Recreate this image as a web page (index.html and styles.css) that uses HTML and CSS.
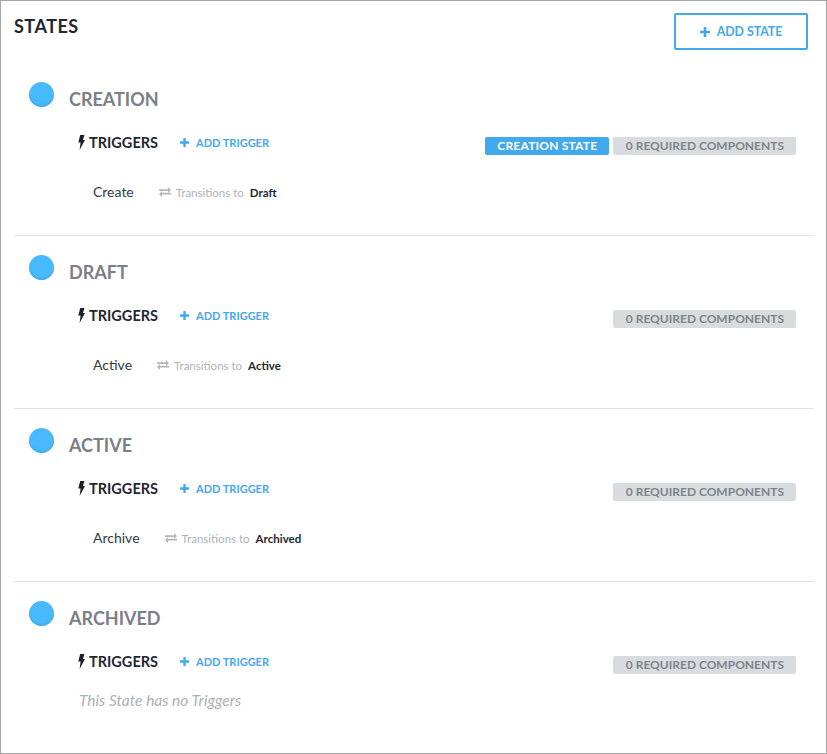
FILE: index.html
```html
<!DOCTYPE html>
<html lang="en">
<head>
    <meta charset="UTF-8">
    <title>States</title>
    <link rel="stylesheet" href="styles.css">
</head>
<body>
    <div class="panel">
        <div class="panel-head">
            <h2>STATES</h2>
            <a class="add-state" href="#">
                <svg class="plus" viewBox="0 0 10 10"><path d="M3.7 0h2.6v3.7H10v2.6H6.3V10H3.7V6.3H0V3.7h3.7z"/></svg>
                ADD STATE
            </a>
        </div>

        <div class="state">
            <span class="dot"></span>
            <div class="state-body">
                <h3>CREATION</h3>
                <div class="trigger-bar">
                    <svg class="bolt" viewBox="0 0 7 15"><path d="M2.2 0h4.3L4.9 5H7L1.6 15l1-7.4H.3z"/></svg>
                    <span class="trigger-title">TRIGGERS</span>
                    <a class="add-trigger" href="#">
                        <svg class="plus" viewBox="0 0 10 10"><path d="M3.7 0h2.6v3.7H10v2.6H6.3V10H3.7V6.3H0V3.7h3.7z"/></svg>
                        ADD TRIGGER
                    </a>
                    <div class="badges">
                        <span class="badge badge-blue">CREATION STATE</span>
                        <span class="badge">0 REQUIRED COMPONENTS</span>
                    </div>
                </div>
                <div class="trigger-row">
                    <span class="trigger-name">Create</span>
                    <svg class="swap" viewBox="0 0 12 10"><path d="M0 2.2h9V0l3 3-3 3V3.9H0zM12 5.8H3V4L0 7l3 3V7.6h9z"/></svg>
                    <span class="to-label">Transitions to</span>
                    <b class="to-state">Draft</b>
                </div>
            </div>
        </div>

        <div class="state">
            <span class="dot"></span>
            <div class="state-body">
                <h3>DRAFT</h3>
                <div class="trigger-bar">
                    <svg class="bolt" viewBox="0 0 7 15"><path d="M2.2 0h4.3L4.9 5H7L1.6 15l1-7.4H.3z"/></svg>
                    <span class="trigger-title">TRIGGERS</span>
                    <a class="add-trigger" href="#">
                        <svg class="plus" viewBox="0 0 10 10"><path d="M3.7 0h2.6v3.7H10v2.6H6.3V10H3.7V6.3H0V3.7h3.7z"/></svg>
                        ADD TRIGGER
                    </a>
                    <div class="badges">
                        <span class="badge">0 REQUIRED COMPONENTS</span>
                    </div>
                </div>
                <div class="trigger-row">
                    <span class="trigger-name">Active</span>
                    <svg class="swap" viewBox="0 0 12 10"><path d="M0 2.2h9V0l3 3-3 3V3.9H0zM12 5.8H3V4L0 7l3 3V7.6h9z"/></svg>
                    <span class="to-label">Transitions to</span>
                    <b class="to-state">Active</b>
                </div>
            </div>
        </div>

        <div class="state">
            <span class="dot"></span>
            <div class="state-body">
                <h3>ACTIVE</h3>
                <div class="trigger-bar">
                    <svg class="bolt" viewBox="0 0 7 15"><path d="M2.2 0h4.3L4.9 5H7L1.6 15l1-7.4H.3z"/></svg>
                    <span class="trigger-title">TRIGGERS</span>
                    <a class="add-trigger" href="#">
                        <svg class="plus" viewBox="0 0 10 10"><path d="M3.7 0h2.6v3.7H10v2.6H6.3V10H3.7V6.3H0V3.7h3.7z"/></svg>
                        ADD TRIGGER
                    </a>
                    <div class="badges">
                        <span class="badge">0 REQUIRED COMPONENTS</span>
                    </div>
                </div>
                <div class="trigger-row">
                    <span class="trigger-name">Archive</span>
                    <svg class="swap" viewBox="0 0 12 10"><path d="M0 2.2h9V0l3 3-3 3V3.9H0zM12 5.8H3V4L0 7l3 3V7.6h9z"/></svg>
                    <span class="to-label">Transitions to</span>
                    <b class="to-state">Archived</b>
                </div>
            </div>
        </div>

        <div class="state">
            <span class="dot"></span>
            <div class="state-body">
                <h3>ARCHIVED</h3>
                <div class="trigger-bar">
                    <svg class="bolt" viewBox="0 0 7 15"><path d="M2.2 0h4.3L4.9 5H7L1.6 15l1-7.4H.3z"/></svg>
                    <span class="trigger-title">TRIGGERS</span>
                    <a class="add-trigger" href="#">
                        <svg class="plus" viewBox="0 0 10 10"><path d="M3.7 0h2.6v3.7H10v2.6H6.3V10H3.7V6.3H0V3.7h3.7z"/></svg>
                        ADD TRIGGER
                    </a>
                    <div class="badges">
                        <span class="badge">0 REQUIRED COMPONENTS</span>
                    </div>
                </div>
                <p class="no-triggers">This State has no Triggers</p>
            </div>
        </div>
    </div>
</body>
</html>
```

FILE: styles.css
```css
body {
    margin: 0;
    font-family: Lato, "Open Sans", sans-serif;
    background: #fff;
}
.panel {
    box-sizing: border-box;
    width: 827px;
    height: 754px;
    border: 1px solid #a6a6a6;
    padding: 12px 12px 0 13px;
}
.panel-head {
    display: flex;
    justify-content: space-between;
    height: 50px;
}
.panel-head h2 {
    margin: 1px 0 0;
    font-size: 18px;
    line-height: 25px;
    letter-spacing: 0.5px;
    font-weight: 700;
    color: #1f2733;
}
.add-state {
    box-sizing: border-box;
    width: 134px;
    height: 37px;
    margin-right: 6px;
    border: 2px solid #42a9ec;
    border-radius: 2px;
    display: flex;
    align-items: center;
    justify-content: center;
    gap: 7px;
    color: #42a9ec;
    font-size: 12.3px;
    font-weight: 700;
    text-decoration: none;
}
.plus {
    width: 10px;
    height: 10px;
    fill: #42a9ec;
}
.state {
    box-sizing: border-box;
    height: 173px;
    display: flex;
    border-bottom: 1px solid #e0e2e4;
    padding-left: 15px;
}
.state:last-child {
    border-bottom: 0;
}
.dot {
    flex: none;
    width: 25px;
    height: 25px;
    margin-top: 19px;
    border-radius: 50%;
    background: #48b9fd;
    box-shadow: inset 0 -2px 1px #42aeef;
}
.state-body {
    flex: 1;
    padding: 24px 18px 0 15px;
}
.state-body h3 {
    margin: 0;
    font-size: 18px;
    line-height: 24px;
    font-weight: 700;
    color: #7b8087;
}
.trigger-bar {
    display: flex;
    align-items: center;
    height: 22px;
    margin-top: 20px;
    padding-left: 9px;
}
.bolt {
    width: 7px;
    height: 15px;
    fill: #1b1f27;
    margin-right: 4px;
}
.trigger-title {
    font-size: 14.5px;
    font-weight: 700;
    color: #1f2733;
    width: 91px;
}
.add-trigger {
    display: flex;
    align-items: center;
    gap: 7px;
    color: #42a9ec;
    font-size: 11px;
    font-weight: 700;
    text-decoration: none;
}
.add-trigger .plus {
    width: 9px;
    height: 9px;
}
.badges {
    display: flex;
    gap: 4px;
    margin-left: auto;
    margin-top: 8px;
}
.badge {
    height: 18px;
    line-height: 18px;
    padding: 0 12px 0 12.5px;
    border-radius: 2px;
    background: #d9dcdf;
    color: #7f8489;
    font-size: 12px;
    font-weight: 700;
}
.badge-blue {
    background: #42a9ec;
    color: #fff;
    letter-spacing: 0.2px;
}
.trigger-row {
    display: flex;
    align-items: center;
    margin-top: 29px;
    padding-left: 24px;
    height: 20px;
}
.trigger-name {
    font-size: 14px;
    color: #333a45;
    margin-right: 25px;
    margin-bottom: 2px;
}
.swap {
    width: 12px;
    height: 10px;
    fill: #b3b6ba;
    margin-right: 5px;
}
.to-label {
    font-size: 11.5px;
    color: #b0b3b7;
    margin-right: 6px;
}
.to-state {
    font-size: 11.5px;
    font-weight: 700;
    color: #1f2733;
}
.no-triggers {
    margin: 19px 0 0 10px;
    font-size: 15.5px;
    font-style: italic;
    color: #adb0b4;
}
```
